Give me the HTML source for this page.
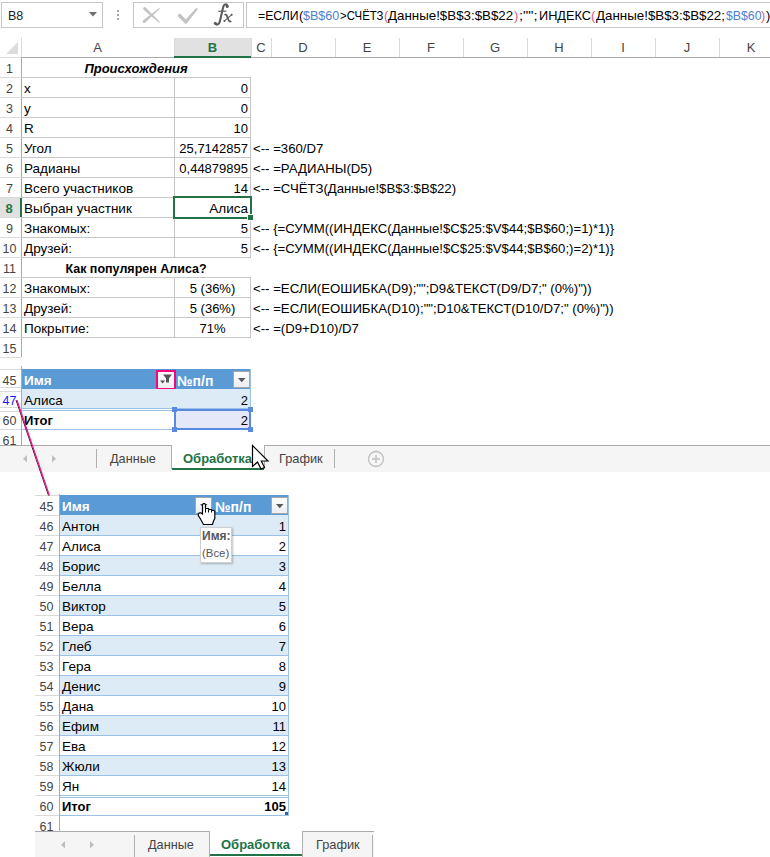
<!DOCTYPE html><html><head><meta charset="utf-8"><style>
html,body{margin:0;padding:0;}
body{width:770px;height:857px;position:relative;overflow:hidden;background:#fff;font-family:"Liberation Sans", sans-serif;font-size:13px;color:#000;}
div{box-sizing:border-box;}
</style></head><body>
<div style="position:absolute;left:1px;top:2px;width:102px;height:26px;border:1px solid #c6c6c6;background:#fff"></div>
<div style="position:absolute;left:8px;top:6px;height:20px;line-height:20px;text-align:left;white-space:pre;font-size:12.5px;color:#222">B8</div>
<svg style="position:absolute;left:89px;top:12px" width="8" height="5"><polygon points="0,0 8,0 4,4.5" fill="#6d6d6d"/></svg>
<div style="position:absolute;left:117px;top:10px;width:2px;height:2px;background:#a6a6a6"></div>
<div style="position:absolute;left:117px;top:14px;width:2px;height:2px;background:#a6a6a6"></div>
<div style="position:absolute;left:117px;top:18px;width:2px;height:2px;background:#a6a6a6"></div>
<div style="position:absolute;left:133px;top:2px;width:111px;height:26px;border:1px solid #c6c6c6;background:#fff"></div>
<svg style="position:absolute;left:130px;top:0px" width="80" height="30" viewBox="130 0 80 30"><g fill="#c3c3c3"><polygon points="143.59,9.70 158.99,22.64 159.81,21.76 145.61,7.50"/><polygon points="159.21,7.94 143.23,20.25 145.17,22.55 159.99,8.86"/><circle cx="144.6" cy="8.6" r="1.5"/><circle cx="144.2" cy="21.4" r="1.5"/><polygon points="178.31,16.85 184.85,23.31 187.15,21.09 180.89,14.35"/><polygon points="186.78,23.56 197.96,9.04 196.44,7.76 184.02,21.24"/><circle cx="179.6" cy="15.6" r="1.8"/><circle cx="185.8" cy="22" r="1.7"/></g></svg>
<svg style="position:absolute;left:200px;top:0px" width="40" height="30" viewBox="200 0 40 30"><path d="M227.6,6.8 C227.2,3.6 223.8,3.6 223.2,7 L219.9,21.2 C219.2,24.6 216.6,25.6 215.3,23.4" stroke="#5e5e5e" stroke-width="2.1" fill="none"/><circle cx="227.2" cy="6.5" r="1.5" fill="#5e5e5e"/><circle cx="215.3" cy="23.3" r="1.5" fill="#5e5e5e"/><path d="M218.2,11.2 H226.4" stroke="#5e5e5e" stroke-width="1.2"/><path d="M224.6,15.2 C225.8,14 226.7,14.8 227.2,16.4 L228.4,19.8 C228.9,21.5 230.2,21.9 231.2,21" stroke="#5e5e5e" stroke-width="1.8" fill="none"/><path d="M231.8,14.7 L224.3,21.2" stroke="#5e5e5e" stroke-width="1.1"/><circle cx="231.7" cy="14.8" r="1" fill="#5e5e5e"/><circle cx="224.4" cy="21.1" r="1" fill="#5e5e5e"/></svg>
<div style="position:absolute;left:246px;top:2px;width:540px;height:26px;border:1px solid #c6c6c6;background:#fff"></div>
<div style="position:absolute;left:258.4px;top:6px;height:20px;line-height:20px;white-space:pre;font-size:13px;color:#000;transform:scaleX(0.9418);transform-origin:0 0">=ЕСЛИ</div>
<div style="position:absolute;left:299px;top:6px;height:20px;line-height:20px;white-space:pre;font-size:13px;color:#000;transform:scaleX(0.9908);transform-origin:0 0">(</div>
<div style="position:absolute;left:303.2px;top:6px;height:20px;line-height:20px;white-space:pre;font-size:13px;color:#4d80d0;transform:scaleX(0.9657);transform-origin:0 0">$B$60</div>
<div style="position:absolute;left:340.3px;top:6px;height:20px;line-height:20px;white-space:pre;font-size:13px;color:#000;transform:scaleX(0.8779);transform-origin:0 0">&gt;СЧЁТЗ</div>
<div style="position:absolute;left:384px;top:6px;height:20px;line-height:20px;white-space:pre;font-size:13px;color:#e0567a;transform:scaleX(0.9908);transform-origin:0 0">(</div>
<div style="position:absolute;left:388px;top:6px;height:20px;line-height:20px;white-space:pre;font-size:13px;color:#000;transform:scaleX(1.0249);transform-origin:0 0">Данные!$B$3:$B$22</div>
<div style="position:absolute;left:514px;top:6px;height:20px;line-height:20px;white-space:pre;font-size:13px;color:#e0567a;transform:scaleX(0.9908);transform-origin:0 0">)</div>
<div style="position:absolute;left:519px;top:6px;height:20px;line-height:20px;white-space:pre;font-size:13px;color:#000;transform:scaleX(1.1246);transform-origin:0 0">;"";</div>
<div style="position:absolute;left:539px;top:6px;height:20px;line-height:20px;white-space:pre;font-size:13px;color:#000;transform:scaleX(0.9806);transform-origin:0 0">ИНДЕКС</div>
<div style="position:absolute;left:591px;top:6px;height:20px;line-height:20px;white-space:pre;font-size:13px;color:#e0567a;transform:scaleX(0.9908);transform-origin:0 0">(</div>
<div style="position:absolute;left:595.5px;top:6px;height:20px;line-height:20px;white-space:pre;font-size:13px;color:#000;transform:scaleX(1.0257);transform-origin:0 0">Данные!$B$3:$B$22;</div>
<div style="position:absolute;left:725.5px;top:6px;height:20px;line-height:20px;white-space:pre;font-size:13px;color:#4d80d0;transform:scaleX(0.9444);transform-origin:0 0">$B$60</div>
<div style="position:absolute;left:761.4px;top:6px;height:20px;line-height:20px;white-space:pre;font-size:13px;color:#e0567a;transform:scaleX(0.9908);transform-origin:0 0">)</div>
<div style="position:absolute;left:766px;top:6px;height:20px;line-height:20px;white-space:pre;font-size:13px;color:#000;transform:scaleX(0.9908);transform-origin:0 0">)</div>
<svg style="position:absolute;left:6px;top:42px" width="13" height="13"><polygon points="0,12 12,12 12,0" fill="#dcdcdc"/></svg>
<div style="position:absolute;left:174px;top:38px;width:77px;height:19px;background:#e1e1e1"></div>
<div style="position:absolute;left:21px;top:38px;width:1px;height:19px;background:#dadada"></div>
<div style="position:absolute;left:21px;top:38px;width:153px;height:19px;line-height:19px;text-align:center;white-space:pre;color:#444444;font-size:13px">A</div>
<div style="position:absolute;left:174px;top:38px;width:1px;height:19px;background:#dadada"></div>
<div style="position:absolute;left:174px;top:38px;width:77px;height:19px;line-height:19px;text-align:center;white-space:pre;color:#217346;font-weight:bold;font-size:13px">B</div>
<div style="position:absolute;left:251px;top:38px;width:1px;height:19px;background:#dadada"></div>
<div style="position:absolute;left:251px;top:38px;width:20px;height:19px;line-height:19px;text-align:center;white-space:pre;color:#444444;font-size:13px">C</div>
<div style="position:absolute;left:271px;top:38px;width:1px;height:19px;background:#dadada"></div>
<div style="position:absolute;left:271px;top:38px;width:64px;height:19px;line-height:19px;text-align:center;white-space:pre;color:#444444;font-size:13px">D</div>
<div style="position:absolute;left:335px;top:38px;width:1px;height:19px;background:#dadada"></div>
<div style="position:absolute;left:335px;top:38px;width:64px;height:19px;line-height:19px;text-align:center;white-space:pre;color:#444444;font-size:13px">E</div>
<div style="position:absolute;left:399px;top:38px;width:1px;height:19px;background:#dadada"></div>
<div style="position:absolute;left:399px;top:38px;width:64px;height:19px;line-height:19px;text-align:center;white-space:pre;color:#444444;font-size:13px">F</div>
<div style="position:absolute;left:463px;top:38px;width:1px;height:19px;background:#dadada"></div>
<div style="position:absolute;left:463px;top:38px;width:64px;height:19px;line-height:19px;text-align:center;white-space:pre;color:#444444;font-size:13px">G</div>
<div style="position:absolute;left:527px;top:38px;width:1px;height:19px;background:#dadada"></div>
<div style="position:absolute;left:527px;top:38px;width:64px;height:19px;line-height:19px;text-align:center;white-space:pre;color:#444444;font-size:13px">H</div>
<div style="position:absolute;left:591px;top:38px;width:1px;height:19px;background:#dadada"></div>
<div style="position:absolute;left:591px;top:38px;width:64px;height:19px;line-height:19px;text-align:center;white-space:pre;color:#444444;font-size:13px">I</div>
<div style="position:absolute;left:655px;top:38px;width:1px;height:19px;background:#dadada"></div>
<div style="position:absolute;left:655px;top:38px;width:64px;height:19px;line-height:19px;text-align:center;white-space:pre;color:#444444;font-size:13px">J</div>
<div style="position:absolute;left:719px;top:38px;width:1px;height:19px;background:#dadada"></div>
<div style="position:absolute;left:719px;top:38px;width:64px;height:19px;line-height:19px;text-align:center;white-space:pre;color:#444444;font-size:13px">K</div>
<div style="position:absolute;left:21px;top:57px;width:749px;height:1px;background:#ababab"></div>
<div style="position:absolute;left:0px;top:57px;width:21px;height:1px;background:#dadada"></div>
<div style="position:absolute;left:174px;top:56px;width:77px;height:2px;background:#217346"></div>
<div style="position:absolute;left:21px;top:38px;width:1px;height:19px;background:#dadada"></div>
<div style="position:absolute;left:21px;top:57px;width:1px;height:300px;background:#ababab"></div>
<div style="position:absolute;left:0px;top:59px;width:19px;height:20px;line-height:20px;text-align:center;white-space:pre;color:#444444;font-size:12.5px">1</div>
<div style="position:absolute;left:0px;top:77px;width:21px;height:1px;background:#dadada"></div>
<div style="position:absolute;left:0px;top:79px;width:19px;height:20px;line-height:20px;text-align:center;white-space:pre;color:#444444;font-size:12.5px">2</div>
<div style="position:absolute;left:0px;top:97px;width:21px;height:1px;background:#dadada"></div>
<div style="position:absolute;left:0px;top:99px;width:19px;height:20px;line-height:20px;text-align:center;white-space:pre;color:#444444;font-size:12.5px">3</div>
<div style="position:absolute;left:0px;top:117px;width:21px;height:1px;background:#dadada"></div>
<div style="position:absolute;left:0px;top:119px;width:19px;height:20px;line-height:20px;text-align:center;white-space:pre;color:#444444;font-size:12.5px">4</div>
<div style="position:absolute;left:0px;top:137px;width:21px;height:1px;background:#dadada"></div>
<div style="position:absolute;left:0px;top:139px;width:19px;height:20px;line-height:20px;text-align:center;white-space:pre;color:#444444;font-size:12.5px">5</div>
<div style="position:absolute;left:0px;top:157px;width:21px;height:1px;background:#dadada"></div>
<div style="position:absolute;left:0px;top:159px;width:19px;height:20px;line-height:20px;text-align:center;white-space:pre;color:#444444;font-size:12.5px">6</div>
<div style="position:absolute;left:0px;top:177px;width:21px;height:1px;background:#dadada"></div>
<div style="position:absolute;left:0px;top:179px;width:19px;height:20px;line-height:20px;text-align:center;white-space:pre;color:#444444;font-size:12.5px">7</div>
<div style="position:absolute;left:0px;top:197px;width:21px;height:1px;background:#dadada"></div>
<div style="position:absolute;left:0px;top:198px;width:21px;height:19px;background:#e1e1e1"></div>
<div style="position:absolute;left:20px;top:198px;width:2px;height:19px;background:#217346"></div>
<div style="position:absolute;left:0px;top:199px;width:18px;height:20px;line-height:20px;text-align:center;white-space:pre;color:#217346;font-weight:bold;font-size:13px">8</div>
<div style="position:absolute;left:0px;top:217px;width:21px;height:1px;background:#dadada"></div>
<div style="position:absolute;left:0px;top:219px;width:19px;height:20px;line-height:20px;text-align:center;white-space:pre;color:#444444;font-size:12.5px">9</div>
<div style="position:absolute;left:0px;top:237px;width:21px;height:1px;background:#dadada"></div>
<div style="position:absolute;left:0px;top:239px;width:19px;height:20px;line-height:20px;text-align:center;white-space:pre;color:#444444;font-size:12.5px">10</div>
<div style="position:absolute;left:0px;top:257px;width:21px;height:1px;background:#dadada"></div>
<div style="position:absolute;left:0px;top:259px;width:19px;height:20px;line-height:20px;text-align:center;white-space:pre;color:#444444;font-size:12.5px">11</div>
<div style="position:absolute;left:0px;top:277px;width:21px;height:1px;background:#dadada"></div>
<div style="position:absolute;left:0px;top:279px;width:19px;height:20px;line-height:20px;text-align:center;white-space:pre;color:#444444;font-size:12.5px">12</div>
<div style="position:absolute;left:0px;top:297px;width:21px;height:1px;background:#dadada"></div>
<div style="position:absolute;left:0px;top:299px;width:19px;height:20px;line-height:20px;text-align:center;white-space:pre;color:#444444;font-size:12.5px">13</div>
<div style="position:absolute;left:0px;top:317px;width:21px;height:1px;background:#dadada"></div>
<div style="position:absolute;left:0px;top:319px;width:19px;height:20px;line-height:20px;text-align:center;white-space:pre;color:#444444;font-size:12.5px">14</div>
<div style="position:absolute;left:0px;top:337px;width:21px;height:1px;background:#dadada"></div>
<div style="position:absolute;left:0px;top:339px;width:19px;height:20px;line-height:20px;text-align:center;white-space:pre;color:#444444;font-size:12.5px">15</div>
<div style="position:absolute;left:0px;top:357px;width:21px;height:1px;background:#dadada"></div>
<div style="position:absolute;left:21px;top:77px;width:230px;height:1px;background:#c6c6c6"></div>
<div style="position:absolute;left:21px;top:97px;width:230px;height:1px;background:#c6c6c6"></div>
<div style="position:absolute;left:21px;top:117px;width:230px;height:1px;background:#c6c6c6"></div>
<div style="position:absolute;left:21px;top:137px;width:230px;height:1px;background:#c6c6c6"></div>
<div style="position:absolute;left:21px;top:157px;width:230px;height:1px;background:#c6c6c6"></div>
<div style="position:absolute;left:21px;top:177px;width:230px;height:1px;background:#c6c6c6"></div>
<div style="position:absolute;left:21px;top:197px;width:230px;height:1px;background:#c6c6c6"></div>
<div style="position:absolute;left:21px;top:217px;width:230px;height:1px;background:#c6c6c6"></div>
<div style="position:absolute;left:21px;top:237px;width:230px;height:1px;background:#c6c6c6"></div>
<div style="position:absolute;left:21px;top:257px;width:230px;height:1px;background:#c6c6c6"></div>
<div style="position:absolute;left:174px;top:77px;width:1px;height:180px;background:#c6c6c6"></div>
<div style="position:absolute;left:250px;top:77px;width:1px;height:181px;background:#c6c6c6"></div>
<div style="position:absolute;left:21px;top:277px;width:230px;height:1px;background:#c6c6c6"></div>
<div style="position:absolute;left:21px;top:297px;width:230px;height:1px;background:#c6c6c6"></div>
<div style="position:absolute;left:21px;top:317px;width:230px;height:1px;background:#c6c6c6"></div>
<div style="position:absolute;left:21px;top:337px;width:230px;height:1px;background:#c6c6c6"></div>
<div style="position:absolute;left:174px;top:277px;width:1px;height:60px;background:#c6c6c6"></div>
<div style="position:absolute;left:250px;top:277px;width:1px;height:61px;background:#c6c6c6"></div>
<div style="position:absolute;left:21px;top:59px;width:230px;height:20px;line-height:20px;text-align:center;white-space:pre;font-weight:bold;font-style:italic">Происхождения</div>
<div style="position:absolute;left:24px;top:79px;height:20px;line-height:20px;text-align:left;white-space:pre;font-size:13.5px">x</div>
<div style="position:absolute;left:174px;top:79px;width:74px;height:20px;line-height:20px;text-align:right;white-space:pre;">0</div>
<div style="position:absolute;left:24px;top:99px;height:20px;line-height:20px;text-align:left;white-space:pre;font-size:13.5px">y</div>
<div style="position:absolute;left:174px;top:99px;width:74px;height:20px;line-height:20px;text-align:right;white-space:pre;">0</div>
<div style="position:absolute;left:24px;top:119px;height:20px;line-height:20px;text-align:left;white-space:pre;font-size:13.5px">R</div>
<div style="position:absolute;left:174px;top:119px;width:74px;height:20px;line-height:20px;text-align:right;white-space:pre;">10</div>
<div style="position:absolute;left:24px;top:139px;height:20px;line-height:20px;text-align:left;white-space:pre;font-size:13.5px">Угол</div>
<div style="position:absolute;left:174px;top:139px;width:74px;height:20px;line-height:20px;text-align:right;white-space:pre;">25,7142857</div>
<div style="position:absolute;left:253px;top:139px;height:20px;line-height:20px;text-align:left;white-space:pre;font-size:13.2px">&lt;-- =360/D7</div>
<div style="position:absolute;left:24px;top:159px;height:20px;line-height:20px;text-align:left;white-space:pre;font-size:13.5px">Радианы</div>
<div style="position:absolute;left:174px;top:159px;width:74px;height:20px;line-height:20px;text-align:right;white-space:pre;">0,44879895</div>
<div style="position:absolute;left:253px;top:159px;height:20px;line-height:20px;text-align:left;white-space:pre;font-size:13.2px">&lt;-- =РАДИАНЫ(D5)</div>
<div style="position:absolute;left:24px;top:179px;height:20px;line-height:20px;text-align:left;white-space:pre;font-size:13.5px">Всего участников</div>
<div style="position:absolute;left:174px;top:179px;width:74px;height:20px;line-height:20px;text-align:right;white-space:pre;">14</div>
<div style="position:absolute;left:253px;top:179px;height:20px;line-height:20px;text-align:left;white-space:pre;font-size:13.2px">&lt;-- =СЧЁТЗ(Данные!$B$3:$B$22)</div>
<div style="position:absolute;left:24px;top:199px;height:20px;line-height:20px;text-align:left;white-space:pre;font-size:13.5px">Выбран участник</div>
<div style="position:absolute;left:174px;top:199px;width:74px;height:20px;line-height:20px;text-align:right;white-space:pre;font-size:13.5px">Алиса</div>
<div style="position:absolute;left:173px;top:196px;width:79px;height:23px;border:2px solid #217346"></div>
<div style="position:absolute;left:247px;top:214px;width:7px;height:7px;background:#217346;border:1px solid #fff"></div>
<div style="position:absolute;left:24px;top:219px;height:20px;line-height:20px;text-align:left;white-space:pre;font-size:13.5px">Знакомых:</div>
<div style="position:absolute;left:174px;top:219px;width:74px;height:20px;line-height:20px;text-align:right;white-space:pre;">5</div>
<div style="position:absolute;left:253px;top:219px;height:20px;line-height:20px;text-align:left;white-space:pre;font-size:13.2px">&lt;-- {=СУММ((ИНДЕКС(Данные!$C$25:$V$44;$B$60;)=1)*1)}</div>
<div style="position:absolute;left:24px;top:239px;height:20px;line-height:20px;text-align:left;white-space:pre;font-size:13.5px">Друзей:</div>
<div style="position:absolute;left:174px;top:239px;width:74px;height:20px;line-height:20px;text-align:right;white-space:pre;">5</div>
<div style="position:absolute;left:253px;top:239px;height:20px;line-height:20px;text-align:left;white-space:pre;font-size:13.2px">&lt;-- {=СУММ((ИНДЕКС(Данные!$C$25:$V$44;$B$60;)=2)*1)}</div>
<div style="position:absolute;left:21px;top:259px;width:230px;height:20px;line-height:20px;text-align:center;white-space:pre;font-weight:bold;font-size:12.5px">Как популярен Алиса?</div>
<div style="position:absolute;left:24px;top:279px;height:20px;line-height:20px;text-align:left;white-space:pre;font-size:13.5px">Знакомых:</div>
<div style="position:absolute;left:174px;top:279px;width:77px;height:20px;line-height:20px;text-align:center;white-space:pre;">5 (36%)</div>
<div style="position:absolute;left:253px;top:279px;height:20px;line-height:20px;text-align:left;white-space:pre;font-size:13.2px">&lt;-- =ЕСЛИ(ЕОШИБКА(D9);"";D9&amp;ТЕКСТ(D9/D7;" (0%)"))</div>
<div style="position:absolute;left:24px;top:299px;height:20px;line-height:20px;text-align:left;white-space:pre;font-size:13.5px">Друзей:</div>
<div style="position:absolute;left:174px;top:299px;width:77px;height:20px;line-height:20px;text-align:center;white-space:pre;">5 (36%)</div>
<div style="position:absolute;left:253px;top:299px;height:20px;line-height:20px;text-align:left;white-space:pre;font-size:13.2px">&lt;-- =ЕСЛИ(ЕОШИБКА(D10);"";D10&amp;ТЕКСТ(D10/D7;" (0%)"))</div>
<div style="position:absolute;left:24px;top:319px;height:20px;line-height:20px;text-align:left;white-space:pre;font-size:13.5px">Покрытие:</div>
<div style="position:absolute;left:174px;top:319px;width:77px;height:20px;line-height:20px;text-align:center;white-space:pre;">71%</div>
<div style="position:absolute;left:253px;top:319px;height:20px;line-height:20px;text-align:left;white-space:pre;font-size:13.2px">&lt;-- =(D9+D10)/D7</div>
<div style="position:absolute;left:21px;top:366px;width:1px;height:79px;background:#ababab"></div>
<div style="position:absolute;left:0px;top:369px;width:21px;height:1px;background:#dadada"></div>
<div style="position:absolute;left:0px;top:387px;width:21px;height:1px;background:#dadada"></div>
<div style="position:absolute;left:0px;top:391px;width:21px;height:1px;background:#dadada"></div>
<div style="position:absolute;left:0px;top:407px;width:21px;height:1px;background:#dadada"></div>
<div style="position:absolute;left:0px;top:411px;width:21px;height:1px;background:#dadada"></div>
<div style="position:absolute;left:0px;top:429px;width:21px;height:1px;background:#dadada"></div>
<div style="position:absolute;left:0px;top:372px;width:19px;height:19px;line-height:19px;text-align:center;white-space:pre;color:#444444;font-size:12.5px">45</div>
<div style="position:absolute;left:0px;top:392px;width:19px;height:19px;line-height:19px;text-align:center;white-space:pre;color:#1a1aff;font-size:12.5px">47</div>
<div style="position:absolute;left:0px;top:412px;width:19px;height:19px;line-height:19px;text-align:center;white-space:pre;color:#444444;font-size:12.5px">60</div>
<div style="position:absolute;left:0px;top:432px;width:19px;height:19px;line-height:19px;text-align:center;white-space:pre;color:#444444;font-size:12.5px">61</div>
<div style="position:absolute;left:22px;top:369px;width:229px;height:20px;background:#5b9bd5"></div>
<div style="position:absolute;left:24px;top:371px;height:20px;line-height:20px;text-align:left;white-space:pre;color:#fff;font-weight:bold;font-size:13.5px">Имя</div>
<div style="position:absolute;left:177px;top:371px;height:20px;line-height:20px;text-align:left;white-space:pre;color:#fff;font-weight:bold;font-size:14px">№п/п</div>
<div style="position:absolute;left:156px;top:370px;width:20px;height:20px;background:linear-gradient(#fdfdfd,#eceef2);border:2px solid #f5077f"></div>
<svg style="position:absolute;left:0;top:0" width="200" height="400" viewBox="0 0 200 400"><polygon points="163,374.5 172,374.5 169,378.3 169,382.5 166,382.5 166,378.3" fill="#555"/><polygon points="160,380.5 165.2,380.5 162.6,383.6" fill="#555"/></svg>
<div style="position:absolute;left:233px;top:371px;width:17px;height:17px;background:linear-gradient(#fdfdfd,#eceef2);border:1px solid #a6a6a6"></div>
<svg style="position:absolute;left:238px;top:378px" width="8" height="5"><polygon points="0,0 7.5,0 3.75,4.2" fill="#595959"/></svg>
<div style="position:absolute;left:22px;top:389px;width:229px;height:20px;background:#ddebf7"></div>
<div style="position:absolute;left:24px;top:391px;height:20px;line-height:20px;text-align:left;white-space:pre;font-size:13.5px">Алиса</div>
<div style="position:absolute;left:174px;top:391px;width:74px;height:20px;line-height:20px;text-align:right;white-space:pre;">2</div>
<div style="position:absolute;left:22px;top:408px;width:229px;height:1px;background:#9bc2e6"></div>
<div style="position:absolute;left:22px;top:410px;width:229px;height:1px;background:#9bc2e6"></div>
<div style="position:absolute;left:24px;top:411px;height:20px;line-height:20px;text-align:left;white-space:pre;font-weight:bold;font-size:13px">Итог</div>
<div style="position:absolute;left:22px;top:429px;width:229px;height:1px;background:#9bc2e6"></div>
<div style="position:absolute;left:250px;top:369px;width:1px;height:61px;background:#9bc2e6"></div>
<div style="position:absolute;left:174px;top:409px;width:77px;height:21px;background:#e4e8f8;border:2px solid #5a8ae0"></div>
<div style="position:absolute;left:174px;top:411px;width:74px;height:20px;line-height:20px;text-align:right;white-space:pre;">2</div>
<div style="position:absolute;left:172px;top:407px;width:5px;height:5px;background:#5a8ae0"></div>
<div style="position:absolute;left:248px;top:407px;width:5px;height:5px;background:#5a8ae0"></div>
<div style="position:absolute;left:172px;top:427px;width:5px;height:5px;background:#5a8ae0"></div>
<div style="position:absolute;left:248px;top:427px;width:5px;height:5px;background:#5a8ae0"></div>
<div style="position:absolute;left:0px;top:445px;width:770px;height:27px;background:#f5f5f5"></div>
<div style="position:absolute;left:0px;top:445px;width:770px;height:1px;background:#ababab"></div>
<svg style="position:absolute;left:23px;top:455px" width="5" height="8"><polygon points="4,0 4,7.5 0,3.75" fill="#bfbfbf"/></svg>
<svg style="position:absolute;left:52px;top:455px" width="5" height="8"><polygon points="0,0 0,7.5 4,3.75" fill="#bfbfbf"/></svg>
<div style="position:absolute;left:96px;top:449px;width:1px;height:19px;background:#b0b0b0"></div>
<div style="position:absolute;left:110px;top:449px;height:20px;line-height:20px;text-align:left;white-space:pre;color:#444;font-size:12.7px">Данные</div>
<div style="position:absolute;left:171px;top:445px;width:1px;height:24px;background:#b0b0b0"></div>
<div style="position:absolute;left:172px;top:445px;width:92px;height:27px;background:#fff"></div>
<div style="position:absolute;left:172px;top:468px;width:92px;height:2px;background:#217346"></div>
<div style="position:absolute;left:183px;top:449px;height:20px;line-height:20px;text-align:left;white-space:pre;color:#217346;font-weight:bold;font-size:13px">Обработка</div>
<div style="position:absolute;left:264px;top:445px;width:1px;height:24px;background:#b0b0b0"></div>
<div style="position:absolute;left:279px;top:449px;height:20px;line-height:20px;text-align:left;white-space:pre;color:#444;font-size:12.8px">График</div>
<div style="position:absolute;left:334px;top:449px;width:1px;height:19px;background:#b0b0b0"></div>
<svg style="position:absolute;left:367px;top:450px" width="18" height="18"><circle cx="9" cy="9" r="7.5" fill="none" stroke="#c0c0c0" stroke-width="1.3"/><path d="M9,5 V13 M5,9 H13" stroke="#c0c0c0" stroke-width="1.5"/></svg>
<svg style="position:absolute;left:240px;top:440px" width="40" height="35" viewBox="240 440 40 35"><path d="M252.5,445.5 L252.5,466.5 L257.5,462 L261,469 L264.5,467.5 L261.3,461 L268,461 Z" fill="#fff" stroke="#000" stroke-width="1.2" stroke-linejoin="miter"/></svg>
<div style="position:absolute;left:59px;top:494px;width:1px;height:337px;background:#ababab"></div>
<div style="position:absolute;left:35px;top:495px;width:24px;height:1px;background:#dadada"></div>
<div style="position:absolute;left:35px;top:498px;width:23px;height:19px;line-height:19px;text-align:center;white-space:pre;color:#444444;font-size:12.5px">45</div>
<div style="position:absolute;left:35px;top:515px;width:24px;height:1px;background:#dadada"></div>
<div style="position:absolute;left:35px;top:518px;width:23px;height:19px;line-height:19px;text-align:center;white-space:pre;color:#444444;font-size:12.5px">46</div>
<div style="position:absolute;left:35px;top:535px;width:24px;height:1px;background:#dadada"></div>
<div style="position:absolute;left:35px;top:538px;width:23px;height:19px;line-height:19px;text-align:center;white-space:pre;color:#444444;font-size:12.5px">47</div>
<div style="position:absolute;left:35px;top:555px;width:24px;height:1px;background:#dadada"></div>
<div style="position:absolute;left:35px;top:558px;width:23px;height:19px;line-height:19px;text-align:center;white-space:pre;color:#444444;font-size:12.5px">48</div>
<div style="position:absolute;left:35px;top:575px;width:24px;height:1px;background:#dadada"></div>
<div style="position:absolute;left:35px;top:578px;width:23px;height:19px;line-height:19px;text-align:center;white-space:pre;color:#444444;font-size:12.5px">49</div>
<div style="position:absolute;left:35px;top:595px;width:24px;height:1px;background:#dadada"></div>
<div style="position:absolute;left:35px;top:598px;width:23px;height:19px;line-height:19px;text-align:center;white-space:pre;color:#444444;font-size:12.5px">50</div>
<div style="position:absolute;left:35px;top:615px;width:24px;height:1px;background:#dadada"></div>
<div style="position:absolute;left:35px;top:618px;width:23px;height:19px;line-height:19px;text-align:center;white-space:pre;color:#444444;font-size:12.5px">51</div>
<div style="position:absolute;left:35px;top:635px;width:24px;height:1px;background:#dadada"></div>
<div style="position:absolute;left:35px;top:638px;width:23px;height:19px;line-height:19px;text-align:center;white-space:pre;color:#444444;font-size:12.5px">52</div>
<div style="position:absolute;left:35px;top:655px;width:24px;height:1px;background:#dadada"></div>
<div style="position:absolute;left:35px;top:658px;width:23px;height:19px;line-height:19px;text-align:center;white-space:pre;color:#444444;font-size:12.5px">53</div>
<div style="position:absolute;left:35px;top:675px;width:24px;height:1px;background:#dadada"></div>
<div style="position:absolute;left:35px;top:678px;width:23px;height:19px;line-height:19px;text-align:center;white-space:pre;color:#444444;font-size:12.5px">54</div>
<div style="position:absolute;left:35px;top:695px;width:24px;height:1px;background:#dadada"></div>
<div style="position:absolute;left:35px;top:698px;width:23px;height:19px;line-height:19px;text-align:center;white-space:pre;color:#444444;font-size:12.5px">55</div>
<div style="position:absolute;left:35px;top:715px;width:24px;height:1px;background:#dadada"></div>
<div style="position:absolute;left:35px;top:718px;width:23px;height:19px;line-height:19px;text-align:center;white-space:pre;color:#444444;font-size:12.5px">56</div>
<div style="position:absolute;left:35px;top:735px;width:24px;height:1px;background:#dadada"></div>
<div style="position:absolute;left:35px;top:738px;width:23px;height:19px;line-height:19px;text-align:center;white-space:pre;color:#444444;font-size:12.5px">57</div>
<div style="position:absolute;left:35px;top:755px;width:24px;height:1px;background:#dadada"></div>
<div style="position:absolute;left:35px;top:758px;width:23px;height:19px;line-height:19px;text-align:center;white-space:pre;color:#444444;font-size:12.5px">58</div>
<div style="position:absolute;left:35px;top:775px;width:24px;height:1px;background:#dadada"></div>
<div style="position:absolute;left:35px;top:778px;width:23px;height:19px;line-height:19px;text-align:center;white-space:pre;color:#444444;font-size:12.5px">59</div>
<div style="position:absolute;left:35px;top:795px;width:24px;height:1px;background:#dadada"></div>
<div style="position:absolute;left:35px;top:798px;width:23px;height:19px;line-height:19px;text-align:center;white-space:pre;color:#444444;font-size:12.5px">60</div>
<div style="position:absolute;left:35px;top:815px;width:24px;height:1px;background:#dadada"></div>
<div style="position:absolute;left:35px;top:818px;width:23px;height:19px;line-height:19px;text-align:center;white-space:pre;color:#444444;font-size:12.5px">61</div>
<div style="position:absolute;left:35px;top:835px;width:24px;height:1px;background:#dadada"></div>
<div style="position:absolute;left:60px;top:495px;width:229px;height:20px;background:#5b9bd5"></div>
<div style="position:absolute;left:62px;top:497px;height:20px;line-height:20px;text-align:left;white-space:pre;color:#fff;font-weight:bold;font-size:13.5px">Имя</div>
<div style="position:absolute;left:215px;top:497px;height:20px;line-height:20px;text-align:left;white-space:pre;color:#fff;font-weight:bold;font-size:14px">№п/п</div>
<div style="position:absolute;left:195px;top:497px;width:17px;height:17px;background:linear-gradient(#fdfdfd,#eceef2);border:1px solid #a6a6a6"></div>
<svg style="position:absolute;left:200px;top:504px" width="8" height="5"><polygon points="0,0 7.5,0 3.75,4.2" fill="#595959"/></svg>
<div style="position:absolute;left:271px;top:497px;width:17px;height:17px;background:linear-gradient(#fdfdfd,#eceef2);border:1px solid #a6a6a6"></div>
<svg style="position:absolute;left:276px;top:504px" width="8" height="5"><polygon points="0,0 7.5,0 3.75,4.2" fill="#595959"/></svg>
<div style="position:absolute;left:60px;top:515px;width:229px;height:20px;background:#ddebf7"></div>
<div style="position:absolute;left:60px;top:555px;width:229px;height:20px;background:#ddebf7"></div>
<div style="position:absolute;left:60px;top:595px;width:229px;height:20px;background:#ddebf7"></div>
<div style="position:absolute;left:60px;top:635px;width:229px;height:20px;background:#ddebf7"></div>
<div style="position:absolute;left:60px;top:675px;width:229px;height:20px;background:#ddebf7"></div>
<div style="position:absolute;left:60px;top:715px;width:229px;height:20px;background:#ddebf7"></div>
<div style="position:absolute;left:60px;top:755px;width:229px;height:20px;background:#ddebf7"></div>
<div style="position:absolute;left:62px;top:517px;height:20px;line-height:20px;text-align:left;white-space:pre;font-size:13.5px">Антон</div>
<div style="position:absolute;left:212px;top:517px;width:74px;height:20px;line-height:20px;text-align:right;white-space:pre;">1</div>
<div style="position:absolute;left:60px;top:535px;width:229px;height:1px;background:#9bc2e6"></div>
<div style="position:absolute;left:62px;top:537px;height:20px;line-height:20px;text-align:left;white-space:pre;font-size:13.5px">Алиса</div>
<div style="position:absolute;left:212px;top:537px;width:74px;height:20px;line-height:20px;text-align:right;white-space:pre;">2</div>
<div style="position:absolute;left:60px;top:555px;width:229px;height:1px;background:#9bc2e6"></div>
<div style="position:absolute;left:62px;top:557px;height:20px;line-height:20px;text-align:left;white-space:pre;font-size:13.5px">Борис</div>
<div style="position:absolute;left:212px;top:557px;width:74px;height:20px;line-height:20px;text-align:right;white-space:pre;">3</div>
<div style="position:absolute;left:60px;top:575px;width:229px;height:1px;background:#9bc2e6"></div>
<div style="position:absolute;left:62px;top:577px;height:20px;line-height:20px;text-align:left;white-space:pre;font-size:13.5px">Белла</div>
<div style="position:absolute;left:212px;top:577px;width:74px;height:20px;line-height:20px;text-align:right;white-space:pre;">4</div>
<div style="position:absolute;left:60px;top:595px;width:229px;height:1px;background:#9bc2e6"></div>
<div style="position:absolute;left:62px;top:597px;height:20px;line-height:20px;text-align:left;white-space:pre;font-size:13.5px">Виктор</div>
<div style="position:absolute;left:212px;top:597px;width:74px;height:20px;line-height:20px;text-align:right;white-space:pre;">5</div>
<div style="position:absolute;left:60px;top:615px;width:229px;height:1px;background:#9bc2e6"></div>
<div style="position:absolute;left:62px;top:617px;height:20px;line-height:20px;text-align:left;white-space:pre;font-size:13.5px">Вера</div>
<div style="position:absolute;left:212px;top:617px;width:74px;height:20px;line-height:20px;text-align:right;white-space:pre;">6</div>
<div style="position:absolute;left:60px;top:635px;width:229px;height:1px;background:#9bc2e6"></div>
<div style="position:absolute;left:62px;top:637px;height:20px;line-height:20px;text-align:left;white-space:pre;font-size:13.5px">Глеб</div>
<div style="position:absolute;left:212px;top:637px;width:74px;height:20px;line-height:20px;text-align:right;white-space:pre;">7</div>
<div style="position:absolute;left:60px;top:655px;width:229px;height:1px;background:#9bc2e6"></div>
<div style="position:absolute;left:62px;top:657px;height:20px;line-height:20px;text-align:left;white-space:pre;font-size:13.5px">Гера</div>
<div style="position:absolute;left:212px;top:657px;width:74px;height:20px;line-height:20px;text-align:right;white-space:pre;">8</div>
<div style="position:absolute;left:60px;top:675px;width:229px;height:1px;background:#9bc2e6"></div>
<div style="position:absolute;left:62px;top:677px;height:20px;line-height:20px;text-align:left;white-space:pre;font-size:13.5px">Денис</div>
<div style="position:absolute;left:212px;top:677px;width:74px;height:20px;line-height:20px;text-align:right;white-space:pre;">9</div>
<div style="position:absolute;left:60px;top:695px;width:229px;height:1px;background:#9bc2e6"></div>
<div style="position:absolute;left:62px;top:697px;height:20px;line-height:20px;text-align:left;white-space:pre;font-size:13.5px">Дана</div>
<div style="position:absolute;left:212px;top:697px;width:74px;height:20px;line-height:20px;text-align:right;white-space:pre;">10</div>
<div style="position:absolute;left:60px;top:715px;width:229px;height:1px;background:#9bc2e6"></div>
<div style="position:absolute;left:62px;top:717px;height:20px;line-height:20px;text-align:left;white-space:pre;font-size:13.5px">Ефим</div>
<div style="position:absolute;left:212px;top:717px;width:74px;height:20px;line-height:20px;text-align:right;white-space:pre;">11</div>
<div style="position:absolute;left:60px;top:735px;width:229px;height:1px;background:#9bc2e6"></div>
<div style="position:absolute;left:62px;top:737px;height:20px;line-height:20px;text-align:left;white-space:pre;font-size:13.5px">Ева</div>
<div style="position:absolute;left:212px;top:737px;width:74px;height:20px;line-height:20px;text-align:right;white-space:pre;">12</div>
<div style="position:absolute;left:60px;top:755px;width:229px;height:1px;background:#9bc2e6"></div>
<div style="position:absolute;left:62px;top:757px;height:20px;line-height:20px;text-align:left;white-space:pre;font-size:13.5px">Жюли</div>
<div style="position:absolute;left:212px;top:757px;width:74px;height:20px;line-height:20px;text-align:right;white-space:pre;">13</div>
<div style="position:absolute;left:60px;top:775px;width:229px;height:1px;background:#9bc2e6"></div>
<div style="position:absolute;left:62px;top:777px;height:20px;line-height:20px;text-align:left;white-space:pre;font-size:13.5px">Ян</div>
<div style="position:absolute;left:212px;top:777px;width:74px;height:20px;line-height:20px;text-align:right;white-space:pre;">14</div>
<div style="position:absolute;left:60px;top:795px;width:229px;height:1px;background:#9bc2e6"></div>
<div style="position:absolute;left:60px;top:797px;width:229px;height:1px;background:#9bc2e6"></div>
<div style="position:absolute;left:62px;top:797px;height:20px;line-height:20px;text-align:left;white-space:pre;font-weight:bold;font-size:13px">Итог</div>
<div style="position:absolute;left:212px;top:797px;width:74px;height:20px;line-height:20px;text-align:right;white-space:pre;font-weight:bold">105</div>
<div style="position:absolute;left:60px;top:815px;width:229px;height:1px;background:#9bc2e6"></div>
<div style="position:absolute;left:288px;top:495px;width:1px;height:321px;background:#9bc2e6"></div>
<div style="position:absolute;left:285px;top:812px;width:3px;height:3px;background:#3060b0"></div>
<div style="position:absolute;left:200px;top:527px;width:32px;height:36px;background:#fff;border:1px solid #cfcfcf;box-shadow:1px 1px 2px rgba(0,0,0,0.25)"></div>
<div style="position:absolute;left:202px;top:527px;height:18px;line-height:18px;text-align:left;white-space:pre;color:#575757;font-weight:bold;font-size:12px">Имя:</div>
<div style="position:absolute;left:202px;top:544px;height:18px;line-height:18px;text-align:left;white-space:pre;color:#575757;font-size:11.4px">(Все)</div>
<svg style="position:absolute;left:190px;top:495px" width="35" height="35" viewBox="190 495 35 35"><path d="M202.5,514 L202.5,504.5 L203.5,503.5 L204.5,503.5 L205.5,504.5 L205.5,508.5 L208.5,508.5 L209,509.5 L211.5,509.5 L212,510.5 L214,510.5 L214.8,511.5 L214.8,518.5 L213.5,521 L212.5,524.5 L203.5,524.5 L200.5,519 L198.3,515.5 L198.3,513.8 L199.5,512.8 L200.8,512.8 L202.5,514 Z" fill="#fff" stroke="#000" stroke-width="1.2" stroke-linejoin="miter"/><path d="M205.5,508.5 V512.5 M208.5,509.5 V512.5 M211.5,510.5 V512.5" stroke="#000" stroke-width="1"/></svg>
<div style="position:absolute;left:35px;top:831px;width:339px;height:26px;background:#f5f5f5"></div>
<div style="position:absolute;left:35px;top:831px;width:339px;height:1px;background:#ababab"></div>
<svg style="position:absolute;left:61px;top:841px" width="5" height="8"><polygon points="4,0 4,7.5 0,3.75" fill="#bfbfbf"/></svg>
<svg style="position:absolute;left:90px;top:841px" width="5" height="8"><polygon points="0,0 0,7.5 4,3.75" fill="#bfbfbf"/></svg>
<div style="position:absolute;left:134px;top:835px;width:1px;height:22px;background:#b0b0b0"></div>
<div style="position:absolute;left:148px;top:835px;height:20px;line-height:20px;text-align:left;white-space:pre;color:#444;font-size:12.7px">Данные</div>
<div style="position:absolute;left:209px;top:831px;width:1px;height:26px;background:#b0b0b0"></div>
<div style="position:absolute;left:210px;top:831px;width:92px;height:26px;background:#fff"></div>
<div style="position:absolute;left:210px;top:854px;width:92px;height:2px;background:#217346"></div>
<div style="position:absolute;left:221px;top:835px;height:20px;line-height:20px;text-align:left;white-space:pre;color:#217346;font-weight:bold;font-size:13px">Обработка</div>
<div style="position:absolute;left:302px;top:831px;width:1px;height:26px;background:#b0b0b0"></div>
<div style="position:absolute;left:316px;top:835px;height:20px;line-height:20px;text-align:left;white-space:pre;color:#444;font-size:12.8px">График</div>
<div style="position:absolute;left:372px;top:835px;width:1px;height:22px;background:#b0b0b0"></div>
<svg style="position:absolute;left:0;top:0" width="770" height="857"><line x1="16.0" y1="400" x2="48.5" y2="495.5" stroke="#3a1a2a" stroke-width="1.0"/><line x1="16.9" y1="400" x2="49.4" y2="495.5" stroke="#f5108a" stroke-width="1.2"/></svg>
</body></html>
